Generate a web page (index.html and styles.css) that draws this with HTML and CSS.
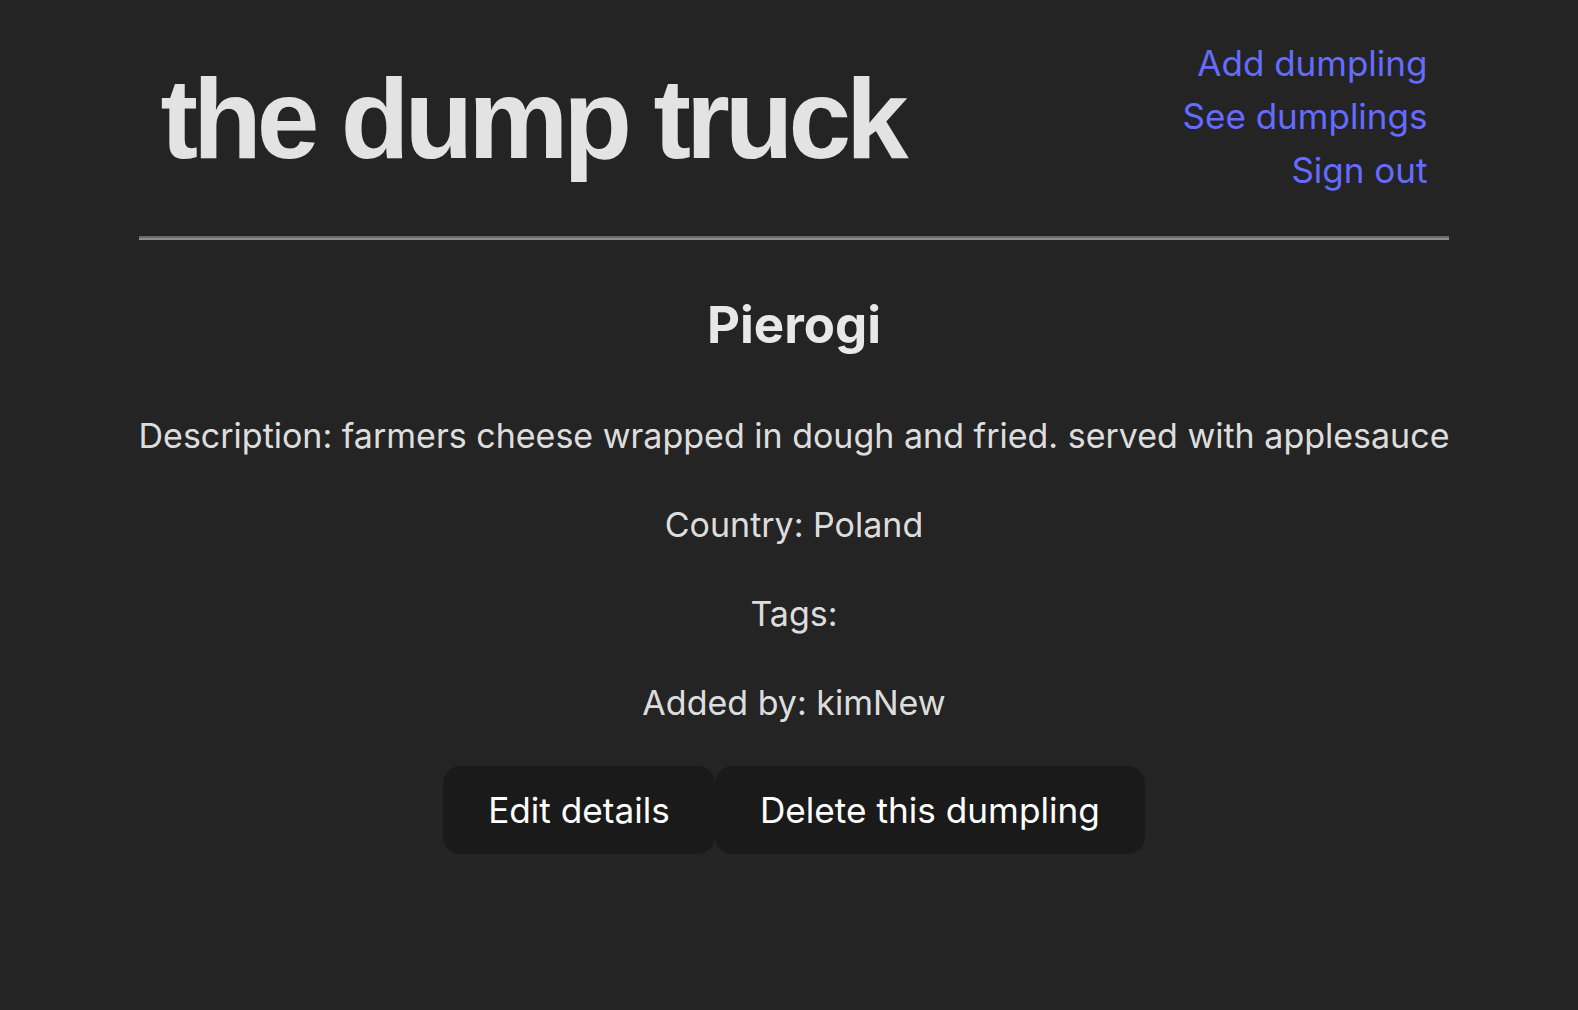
FILE: index.html
```html
<!DOCTYPE html>
<html lang="en">
<head>
<meta charset="utf-8">
<title>the dump truck</title>
<link rel="stylesheet" href="styles.css">
</head>
<body>
<div class="app">
  <header class="header">
    <h1 class="title">the dump truck</h1>
    <nav class="nav">
      <a href="#">Add dumpling</a>
      <a href="#">See dumplings</a>
      <a href="#">Sign out</a>
    </nav>
  </header>
  <hr class="rule">
  <main class="detail">
    <h2 class="name">Pierogi</h2>
    <p>Description: farmers cheese wrapped in dough and fried. served with applesauce</p>
    <p>Country: Poland</p>
    <p>Tags: </p>
    <p>Added by: kimNew</p>
    <div class="actions"><button class="btn">Edit details</button><button class="btn">Delete this dumpling</button></div>
  </main>
</div>
</body>
</html>
```
FILE: styles.css
```css
html, body {
  margin: 0;
  background: #242424;
}
body {
  display: flex;
  justify-content: center;
  padding-left: 10px;
  font-family: Inter, "Noto Sans", sans-serif;
  font-size: 34px;
  line-height: 52.8px;
  color: rgba(255, 255, 255, 0.87);
  color-scheme: dark;
}
.app {
  width: fit-content;
}
.header {
  display: flex;
  justify-content: space-between;
  align-items: flex-start;
  padding: 37px 22px 21px 22px;
}
.title {
  margin: 21px 0 0;
  font-family: "Liberation Sans", Arial, sans-serif;
  font-weight: 700;
  font-size: 112.6px;
  line-height: 1.1;
  letter-spacing: -5px;
  color: #e3e3e3;
}
.nav {
  display: flex;
  flex-direction: column;
  align-items: flex-end;
  font-size: 35px;
  line-height: 53.4px;
}
.nav a {
  color: #646cff;
  font-weight: 400;
  text-decoration: none;
}
.rule {
  height: 0;
  margin: 17.6px 0;
  border: 0;
  border-top: 2px solid #6a6a6a;
  border-bottom: 2px solid #8c8c8c;
}
.detail {
  text-align: center;
}
.name {
  margin: 44.8px 0 45.8px;
  font-size: 51px;
  font-weight: 700;
  line-height: 79.2px;
  color: #e8e8e8;
}
.detail p {
  margin: 36.2px 0;
  white-space: nowrap;
}
.actions {
  display: flex;
  justify-content: center;
  margin-top: 35px;
}
.btn {
  font-family: inherit;
  font-size: 35.2px;
  font-weight: 400;
  line-height: normal;
  color: #ffffff;
  background: #1a1a1a;
  border: 2px solid transparent;
  border-radius: 17.6px;
  padding: 21px 43px;
  cursor: pointer;
}
```
